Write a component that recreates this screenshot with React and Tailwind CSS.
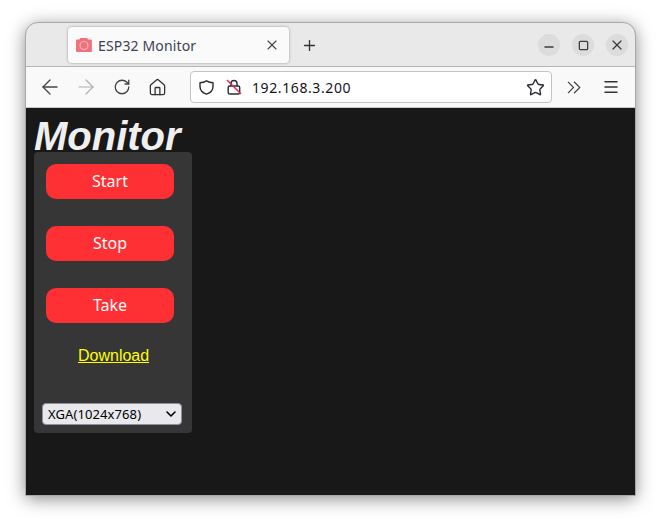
import React from "react";
import { ArrowLeft, ArrowRight, RotateCw, Home, Star, Menu, X, Plus, Minus, Square, ChevronDown } from "lucide-react";

const uiFont = "font-['Noto_Sans','Open_Sans',sans-serif]";

const Favicon = () => (
  <svg width="16" height="16" viewBox="0 0 16 16" className="shrink-0">
    <path d="M0 3.5 a1 1 0 0 1 1-1 h2.5 l.7-1.5 h7 l.7 1.5 h3 a1 1 0 0 1 1 1 V14 a1 1 0 0 1-1 1 H1 a1 1 0 0 1-1-1z" fill="#f0707c" />
    <circle cx="8" cy="8.5" r="4" fill="none" stroke="#fbb4ba" strokeWidth="1.2" />
  </svg>
);

const ShieldIcon = () => (
  <svg width="15" height="15" viewBox="0 0 15 15" fill="none" className="shrink-0">
    <path d="M7.5 .8 C9.5 2 11.5 2.6 14 2.8 V6.5 C14 10.2 11.5 12.8 7.5 14.2 C3.5 12.8 1 10.2 1 6.5 V2.8 C3.5 2.6 5.5 2 7.5 .8z" stroke="#2b2b33" strokeWidth="1.4" strokeLinejoin="round" />
  </svg>
);

const LockOff = () => (
  <svg width="18" height="18" viewBox="0 0 18 18" fill="none" className="shrink-0">
    <path d="M6 8V5.5a3 3 0 0 1 6 0V8" stroke="#2b2b33" strokeWidth="1.4" />
    <rect x="3.2" y="8" width="11.5" height="8" rx="1.6" stroke="#2b2b33" strokeWidth="1.4" />
    <path d="M2 2l14 14" stroke="#e22850" strokeWidth="1.4" />
  </svg>
);

const Overflow = () => (
  <svg width="14" height="13" viewBox="0 0 14 13" fill="none" className="ml-[15px] shrink-0">
    <path d="M1 .8 L6.5 6.5 L1 12.2 M7 .8 L12.8 6.5 L7 12.2" stroke="#444" strokeWidth="1.2" />
  </svg>
);

const WinButton = ({ children }) => (
  <div className="w-[22px] h-[22px] rounded-full bg-[#dcdcdc] flex items-center justify-center text-[#3d3d3d]">
    {children}
  </div>
);

const RedButton = ({ label }) => (
  <button className={`w-[128px] h-[35px] pb-[2px] rounded-[10px] bg-[#ff3034] text-white text-base ${uiFont}`}>
    {label}
  </button>
);

export default function App() {
  return (
    <div className="w-[661px] h-[524px] bg-white overflow-hidden pt-[23px] pl-[26px]">
      <div className="w-[609px] h-[472px] flex flex-col rounded-t-[12px] overflow-hidden shadow-[0_3px_18px_rgba(0,0,0,0.5)] outline outline-1 outline-[#a8a8a8]">
        {/* title bar */}
        <div className="h-[44px] shrink-0 bg-[#e9e9e9] border-b border-[#b5b5b5] flex items-start pl-[42px] pr-[7px]">
          <div className="mt-[4px] w-[221px] h-[36px] bg-[#fafafa] rounded-[4px] shadow-[0_0_3px_rgba(0,0,0,0.35)] flex items-center pl-[8px] pr-[9px] gap-[6px]">
            <Favicon />
            <span className={`flex-1 text-[14px] tracking-[0.15px] text-[#3b4252] ${uiFont}`}>ESP32 Monitor</span>
            <X size={16} strokeWidth={1.1} absoluteStrokeWidth className="text-[#444]" />
          </div>
          <Plus size={17} strokeWidth={1.3} absoluteStrokeWidth className="ml-[12px] mt-[14px] text-[#333]" />
          <div className="ml-auto mt-[11px] flex gap-[12px]">
            <WinButton><Minus size={14} strokeWidth={1.3} absoluteStrokeWidth className="mt-[4px]" /></WinButton>
            <WinButton><Square size={11} strokeWidth={1.3} absoluteStrokeWidth /></WinButton>
            <WinButton><X size={16} strokeWidth={1.3} absoluteStrokeWidth /></WinButton>
          </div>
        </div>

        {/* toolbar */}
        <div className="h-[41px] shrink-0 bg-[#f9f9fa] flex items-center border-b border-[#c8c8c8] pl-[12px] pr-[15px]">
          <ArrowLeft size={24} strokeWidth={1.3} absoluteStrokeWidth className="text-[#444] shrink-0" />
          <ArrowRight size={24} strokeWidth={1.2} absoluteStrokeWidth className="ml-[12px] text-[#b0b0b0] shrink-0" />
          <RotateCw size={18} strokeWidth={1.3} absoluteStrokeWidth className="ml-[15px] text-[#444] shrink-0" />
          <Home size={19} strokeWidth={1.3} absoluteStrokeWidth className="ml-[17px] text-[#333] shrink-0" />
          <div className="ml-[23px] w-[362px] h-[32px] bg-white border border-[#c4c4c4] rounded-[4px] flex items-center pl-[8px] pr-[6px]">
            <ShieldIcon />
            <div className="ml-[11px]"><LockOff /></div>
            <span className={`ml-[9px] flex-1 text-[14px] text-[#15141a] tracking-[0.6px] ${uiFont}`}>192.168.3.200</span>
            <Star size={19} strokeWidth={1.4} absoluteStrokeWidth className="text-[#2b2b33] shrink-0" />
          </div>
          <Overflow />
          <Menu size={18} strokeWidth={1.5} absoluteStrokeWidth className="ml-auto text-[#333] shrink-0" />
        </div>

        {/* page */}
        <div className="flex-1 bg-[#181818] px-[8px] font-['Liberation_Sans',sans-serif]">
          <h1 className="h-[44px] text-[40px] leading-[56px] font-bold italic text-[#efefef]">Monitor</h1>
          <div className="relative w-[158px] h-[281px] bg-[#363636] rounded-[4px] flex flex-col items-start pt-[12px]">
            <div className="ml-[12px] flex flex-col gap-[27px]">
              <RedButton label="Start" />
              <RedButton label="Stop" />
              <RedButton label="Take" />
            </div>
            <a href="#" className="mt-[23px] ml-[44px] text-base leading-[20px] text-[#ffff00] underline">Download</a>
            <div className={`mt-[37px] ml-[8px] w-[140px] h-[22px] bg-[#e9e9ed] border border-[#8f8f9d] rounded-[4px] flex items-center justify-between pl-[5px] pr-[2px] text-[13px] tracking-[0.1px] text-black ${uiFont}`}>
              <span className="pt-[1px]">XGA(1024x768)</span>
              <ChevronDown size={16} strokeWidth={1.6} absoluteStrokeWidth />
            </div>
          </div>
        </div>
      </div>
    </div>
  );
}
